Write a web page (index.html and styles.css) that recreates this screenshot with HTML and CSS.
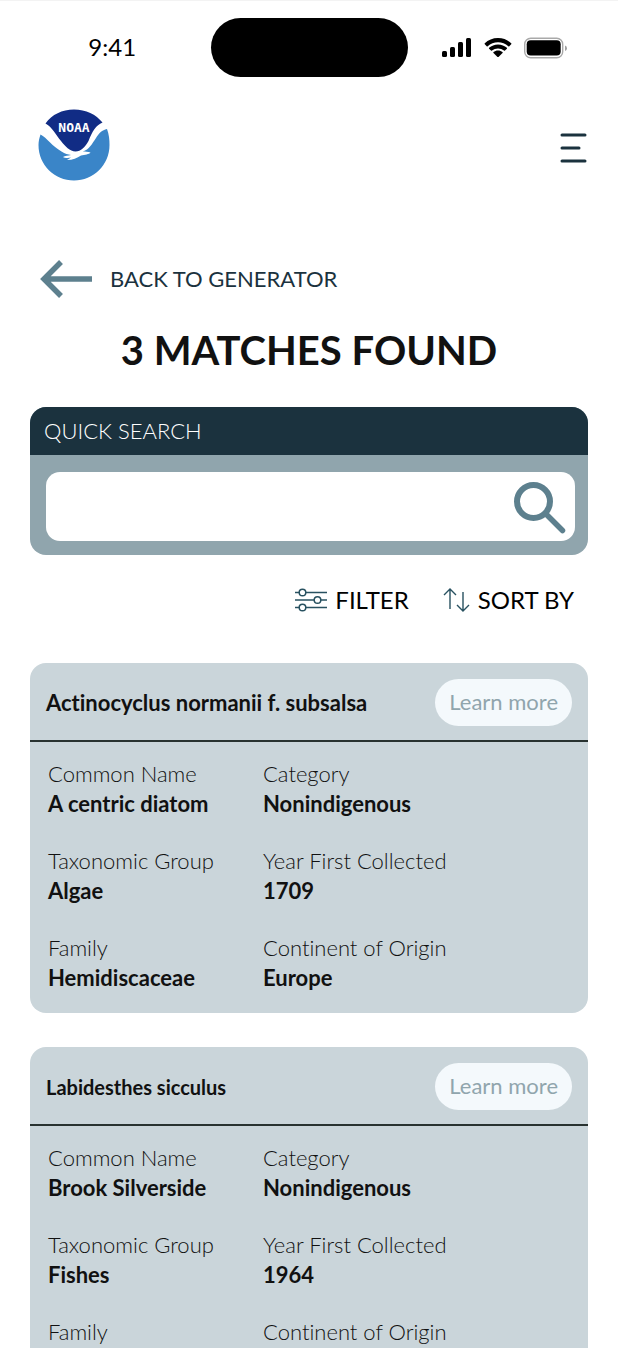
FILE: index.html
```
<!DOCTYPE html>
<html lang="en">
<head>
    <meta charset="UTF-8">
    <meta name="viewport" content="width=device-width, initial-scale=1.0">
    <title>Matches Found</title>
    <link rel="stylesheet" href="styles.css">
</head>
<body>
    <div class="status-bar">
        <span class="status-time">9:41</span>
        <div class="island"></div>
        <div class="status-icons">
            <svg width="30" height="20" viewBox="0 0 30 20" aria-hidden="true">
                <rect x="0" y="13" width="5" height="6" rx="1.5"/>
                <rect x="8" y="9" width="5" height="10" rx="1.5"/>
                <rect x="16" y="4" width="5" height="15" rx="1.5"/>
                <rect x="24" y="0" width="5" height="19" rx="1.5"/>
            </svg>
            <svg width="28" height="20" viewBox="0 0 28 20" aria-hidden="true">
                <path d="M14 0C19.200 0 23.900 2 27.200 5.300Q27.700 5.800 27.200 6.300L25.300 8.200Q24.800 8.600 24.300 8.200C21.500 5.600 17.900 4.200 14 4.200S6.500 5.600 3.700 8.200Q3.200 8.600 2.700 8.200L.8 6.300Q.3 5.800.8 5.300C4.100 2 8.800 0 14 0Z"/>
                <path d="M14 6.400C17.500 6.400 20.600 7.700 22.900 9.800Q23.300 10.200 22.900 10.700L21 12.600Q20.500 13 20 12.600C18.300 11.200 16.300 10.400 14 10.400S9.700 11.200 8 12.600Q7.500 13 7 12.600L5.100 10.700Q4.700 10.200 5.100 9.800C7.400 7.700 10.500 6.400 14 6.400Z"/>
                <path d="M14 12.500C15.700 12.500 17.300 13.100 18.500 14.100Q19 14.500 18.500 15L14.500 18.900Q14 19.300 13.500 18.900L9.500 15Q9 14.500 9.500 14.100C10.700 13.100 12.300 12.500 14 12.500Z"/>
            </svg>
            <svg width="43" height="22" viewBox="0 0 43 22" aria-hidden="true">
                <rect x="0.700" y="1.200" width="38" height="19.500" rx="6" fill="none" stroke="#a9a9a9" stroke-width="1.400"/>
                <rect x="2.700" y="3.300" width="34" height="15.300" rx="4"/>
                <path d="M41 8.500Q43 9.300 43 11.200T41 14Z" fill="#a0a0a0"/>
            </svg>
        </div>
    </div>

    <header class="header">
        <a href="#" class="logo" aria-label="NOAA home">
            <svg width="72" height="72" viewBox="0 0 72 72">
                <path d="M7.500 14.500C14 5.500 24 0.500 36 0.500S58 5.500 64.500 13.500C58 16 54 23 50.500 32C47 38 43 42.500 37.500 42.500C32 42.500 27 37 23 32C18 26 14 18 7.500 14.500Z" fill="#112c85"/>
                <path d="M2.500 25.500C9 29 14 37 23.500 42.500C27 45 30 45.500 33 46C30 46.500 27 47 25 48C27 49.300 31 49 33 48.500L29 51C35 51 39 49 43 46.500C47 45.500 51 45.500 52.500 43.500C50 42.500 47 43 45 42.500C51 40.500 54 35 58 29C61 24 64 21 69 20C71 25 71.500 31 71.500 36C71.500 56 55.500 71.500 36 71.500S0.500 56 0.500 36C0.500 32.500 1.300 29 2.500 25.500Z" fill="#3a85c8"/>
                <text x="36" y="23" text-anchor="middle" class="logo-text">NOAA</text>
            </svg>
        </a>
        <button type="button" class="menu-btn" aria-label="Menu">
            <svg width="27" height="30" viewBox="0 0 27 30" fill="none" stroke="#1b323e" stroke-width="3" stroke-linecap="round">
                <path d="M2 2H25M2 15H19M2 28H25"/>
            </svg>
        </button>
    </header>

    <main class="content">
        <a href="#" class="back-link">
            <svg width="52" height="38" viewBox="0 0 52 38" fill="none" stroke="#5d808e" stroke-width="5.500" aria-hidden="true">
                <path d="M21 2L4 19L21 36M4 19H52"/>
            </svg>
            BACK TO GENERATOR
        </a>

        <h1>3 MATCHES FOUND</h1>

        <form class="search">
            <label for="quick-search">QUICK SEARCH</label>
            <div class="search-body">
                <div class="search-box">
                    <input type="text" id="quick-search">
                    <button type="submit" aria-label="Search">
                        <svg width="54" height="54" viewBox="0 0 54 54" fill="none" stroke="#5d808e" aria-hidden="true">
                            <circle cx="21.500" cy="21.500" r="16.500" stroke-width="6"/>
                            <path d="M34 34L50.500 50.500" stroke-width="5.500" stroke-linecap="round"/>
                        </svg>
                    </button>
                </div>
            </div>
        </form>

        <div class="tools">
            <button type="button">
                <svg width="32" height="24" viewBox="0 0 32 24" fill="none" stroke="#285160" stroke-width="1.500" aria-hidden="true">
                    <path d="M0 4.500H4M11 4.500H32M0 12H19M26 12H32M0 19.500H4M11 19.500H32"/>
                    <circle cx="7.500" cy="4.500" r="3.300"/>
                    <circle cx="22.500" cy="12" r="3.300"/>
                    <circle cx="7.500" cy="19.500" r="3.300"/>
                </svg>
                FILTER
            </button>
            <button type="button">
                <svg width="27" height="24" viewBox="0 0 27 24" fill="none" stroke="#285160" stroke-width="1.400" aria-hidden="true">
                    <path d="M1 7L7 1L13 7M7 1V21M14 17L20 23L26 17M20 23V4"/>
                </svg>
                SORT BY
            </button>
        </div>

        <article class="card">
            <div class="card-header">
                <h2>Actinocyclus normanii f. subsalsa</h2>
                <a href="#" class="learn-more">Learn more</a>
            </div>
            <dl class="details">
                <div>
                    <dt>Common Name</dt>
                    <dd>A centric diatom</dd>
                </div>
                <div>
                    <dt>Category</dt>
                    <dd>Nonindigenous</dd>
                </div>
                <div>
                    <dt>Taxonomic Group</dt>
                    <dd>Algae</dd>
                </div>
                <div>
                    <dt>Year First Collected</dt>
                    <dd>1709</dd>
                </div>
                <div>
                    <dt>Family</dt>
                    <dd>Hemidiscaceae</dd>
                </div>
                <div>
                    <dt>Continent of Origin</dt>
                    <dd>Europe</dd>
                </div>
            </dl>
        </article>

        <article class="card">
            <div class="card-header">
                <h2 class="small">Labidesthes sicculus</h2>
                <a href="#" class="learn-more">Learn more</a>
            </div>
            <dl class="details">
                <div>
                    <dt>Common Name</dt>
                    <dd>Brook Silverside</dd>
                </div>
                <div>
                    <dt>Category</dt>
                    <dd>Nonindigenous</dd>
                </div>
                <div>
                    <dt>Taxonomic Group</dt>
                    <dd>Fishes</dd>
                </div>
                <div>
                    <dt>Year First Collected</dt>
                    <dd>1964</dd>
                </div>
                <div>
                    <dt>Family</dt>
                    <dd>Atherinopsidae</dd>
                </div>
                <div>
                    <dt>Continent of Origin</dt>
                    <dd>North America</dd>
                </div>
            </dl>
        </article>
    </main>
</body>
</html>
```

FILE: styles.css
```
* {
    box-sizing: border-box;
}
body {
    margin: 0;
    font-family: Lato, "Liberation Sans", sans-serif;
    font-size: 22px;
    line-height: 30px;
    font-variant-ligatures: none;
    color: #111;
    background-color: #fff;
    border-top: 1px solid #f3f3f3;
}
a {
    color: inherit;
    text-decoration: none;
}
button {
    padding: 0;
    border: none;
    background: none;
    font: inherit;
    color: inherit;
    cursor: pointer;
}
svg {
    display: block;
    flex: none;
}

/* Status bar */
.status-bar {
    display: grid;
    grid-template-columns: 1fr 197px 1fr;
    align-items: center;
    padding-top: 17px;
}
.status-time {
    padding: 0 0 2px 14px;
    text-align: center;
    font-size: 24px;
    color: #000;
}
.island {
    height: 59px;
    border-radius: 30px;
    background-color: #000;
}
.status-icons {
    display: flex;
    justify-content: center;
    align-items: center;
    gap: 12px;
    padding-right: 16px;
}

/* Header */
.header {
    display: flex;
    justify-content: space-between;
    align-items: center;
    padding: 32px 31px 0 38px;
}
.logo-text {
    font-family: "DejaVu Sans Mono", monospace;
    font-size: 13px;
    font-weight: 700;
    fill: #fff;
}
.menu-btn {
    padding-top: 5px;
}

/* Content */
.content {
    padding: 79px 30px 34px;
}
.back-link {
    display: flex;
    align-items: center;
    gap: 18px;
    padding-left: 10px;
    color: #1b323e;
}
h1 {
    margin: 27px 0 32px;
    font-size: 40px;
    line-height: 50px;
    font-weight: 700;
    text-align: center;
}

/* Quick search */
.search {
    border-radius: 16px;
    overflow: hidden;
    background-color: #90a5ad;
}
.search label {
    display: block;
    padding: 9px 14px;
    font-weight: 300;
    color: #fff;
    background-color: #1b323e;
}
.search-body {
    padding: 17px 13px 14px 16px;
}
.search-box {
    display: flex;
    align-items: center;
    height: 69px;
    padding-right: 9px;
    border-radius: 14px;
    background-color: #fff;
}
.search-box input {
    flex: 1;
    min-width: 0;
    height: 100%;
    padding: 0 16px;
    border: none;
    outline: none;
    background: none;
    font: inherit;
}

/* Filter and sort */
.tools {
    display: flex;
    justify-content: flex-end;
    gap: 34px;
    padding: 30px 14px 48px;
}
.tools button {
    display: flex;
    align-items: center;
    gap: 8px;
    font-size: 24px;
    color: #000;
}

/* Species cards */
.card {
    border-radius: 16px;
    background-color: #cad5da;
}
.card + .card {
    margin-top: 34px;
}
.card-header {
    display: flex;
    justify-content: space-between;
    align-items: center;
    padding: 16px 16px 14px;
    border-bottom: 2px solid #283230;
}
h2 {
    margin: 0;
    font-size: 22px;
    font-weight: 700;
}
h2.small {
    font-size: 20px;
}
.learn-more {
    padding: 8px 14px 9px;
    border-radius: 24px;
    color: #90a5ad;
    background-color: #f4f9fc;
}
.details {
    display: grid;
    grid-template-columns: 215px 1fr;
    row-gap: 27px;
    margin: 0;
    padding: 17px 18px 20px;
}
dt {
    font-weight: 300;
}
dd {
    margin: 0;
    font-weight: 700;
}
```
